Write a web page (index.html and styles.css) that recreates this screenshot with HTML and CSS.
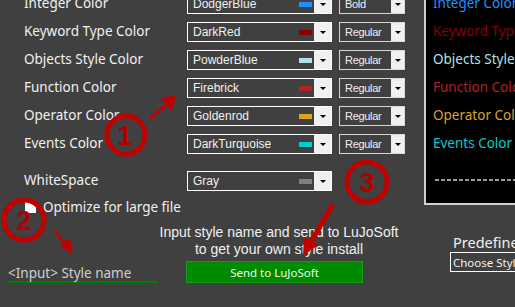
FILE: index.html
```html
<!DOCTYPE html>
<html lang="en">
<head>
    <meta charset="UTF-8">
    <meta name="viewport" content="width=device-width, initial-scale=1.0">
    <title>Style Editor</title>
    <link rel="stylesheet" href="styles.css">
</head>
<body>

<div class="page">
    <div class="top">
        <!-- Color / font settings -->
        <div class="settings">
            <div class="row">
                <span class="label">Integer Color</span>
                <div class="combo color"><span class="val">DodgerBlue</span><i class="swatch" style="background:#1e90ff"></i><b class="arrow"></b></div>
                <div class="combo style"><span class="val">Bold</span><b class="arrow"></b></div>
            </div>
            <div class="row">
                <span class="label">Keyword Type Color</span>
                <div class="combo color"><span class="val">DarkRed</span><i class="swatch" style="background:#8b0000"></i><b class="arrow"></b></div>
                <div class="combo style"><span class="val">Regular</span><b class="arrow"></b></div>
            </div>
            <div class="row">
                <span class="label">Objects Style Color</span>
                <div class="combo color"><span class="val">PowderBlue</span><i class="swatch" style="background:#b0e0e6"></i><b class="arrow"></b></div>
                <div class="combo style"><span class="val">Regular</span><b class="arrow"></b></div>
            </div>
            <div class="row">
                <span class="label">Function Color</span>
                <div class="combo color"><span class="val">Firebrick</span><i class="swatch" style="background:#b22222"></i><b class="arrow"></b></div>
                <div class="combo style"><span class="val">Regular</span><b class="arrow"></b></div>
            </div>
            <div class="row">
                <span class="label">Operator Color</span>
                <div class="combo color"><span class="val">Goldenrod</span><i class="swatch" style="background:#daa520"></i><b class="arrow"></b></div>
                <div class="combo style"><span class="val">Regular</span><b class="arrow"></b></div>
            </div>
            <div class="row">
                <span class="label">Events Color</span>
                <div class="combo color"><span class="val">DarkTurquoise</span><i class="swatch" style="background:#00ced1"></i><b class="arrow"></b></div>
                <div class="combo style"><span class="val">Regular</span><b class="arrow"></b></div>
            </div>
            <div class="row ws">
                <span class="label">WhiteSpace</span>
                <div class="combo color"><span class="val">Gray</span><i class="swatch" style="background:#808080"></i><b class="arrow"></b></div>
            </div>
            <div class="check">
                <span class="box"></span>
                <span>Optimize for large file</span>
            </div>
        </div>

        <!-- Live preview -->
        <div class="preview">
            <div class="pline" style="color:#1e90ff">Integer Color</div>
            <div class="pline" style="color:#8b0000">Keyword Type Color</div>
            <div class="pline" style="color:#b0e0e6">Objects Style Color</div>
            <div class="pline" style="color:#b22222">Function Color</div>
            <div class="pline" style="color:#daa520">Operator Color</div>
            <div class="pline" style="color:#00ced1">Events Color</div>
            <div class="dash"></div>
        </div>
    </div>

    <div class="bottom">
        <div class="name-input">&lt;Input&gt; Style name</div>
        <div class="send">
            <p>Input style name and send to LuJoSoft<br>to get your own style install</p>
            <button class="send-btn">Send to LuJoSoft</button>
        </div>
        <div class="predef">
            <div class="predef-label">Predefined Styles</div>
            <div class="combo choose"><span class="val">Choose Style</span></div>
        </div>
    </div>

    <!-- Red hand-drawn annotations -->
    <svg class="marks" width="515" height="307" viewBox="0 0 515 307">
        <g fill="none" stroke="#c30000">
            <circle cx="126" cy="145" r="19" stroke-width="5"/>
            <circle cx="24" cy="230" r="20" stroke-width="5"/>
            <circle cx="367" cy="192" r="20" stroke-width="5"/>
            <line x1="150" y1="128" x2="169" y2="113" stroke-width="4" stroke-dasharray="5 2"/>
            <line x1="55" y1="241" x2="66" y2="255" stroke-width="3.5" stroke-dasharray="4 2"/>
            <line x1="333" y1="214" x2="311" y2="252" stroke-width="5"/>
        </g>
        <g fill="#c30000">
            <polygon points="177,105 171,121 161,108"/>
            <polygon points="73,264 60,256 70,248"/>
            <polygon points="303,266 304,247 318,255"/>
        </g>
        <g class="num" fill="#b00000">
            <text x="125" y="155">1</text>
            <text x="24" y="240">2</text>
            <text x="367" y="202">3</text>
        </g>
    </svg>
</div>

</body>
</html>
```

FILE: styles.css
```css
body {
    margin: 0;
    background-color: #404040;
    font-family: "Noto Sans", "Open Sans", sans-serif;
    color: #f0f0f0;
    overflow: hidden;
}
.page {
    position: relative;
    width: 515px;
    height: 307px;
}
.top {
    display: flex;
    margin-top: -10px;
}
.settings {
    width: 400px;
    padding-left: 24px;
}
.row {
    display: flex;
    align-items: center;
    height: 28px;
}
.row.ws {
    margin-top: 9px;
}
.label {
    width: 163px;
    font-size: 13.5px;
    margin-top: -2px;
}
.combo {
    display: flex;
    align-items: center;
    box-sizing: border-box;
    height: 20px;
    background-color: #404040;
    font-family: "Liberation Sans", Arial, sans-serif;
    color: #f0f0f0;
}
.combo.color {
    width: 145px;
    border: 1px solid #ffffff;
    font-size: 12px;
}
.combo.style {
    width: 66px;
    margin-left: 7px;
    border: 1px solid #d8d8d8;
    font-size: 11px;
    letter-spacing: -0.3px;
}
.val {
    flex: 1;
    padding-left: 5px;
    white-space: nowrap;
    overflow: hidden;
}
.swatch {
    width: 13px;
    height: 5px;
    margin-right: 2px;
}
.arrow {
    position: relative;
    width: 17px;
    height: 18px;
    background-color: #f0f0f0;
}
.combo.style .arrow {
    width: 13px;
}
.arrow::after {
    content: "";
    position: absolute;
    left: 50%;
    top: 8px;
    margin-left: -3px;
    border-left: 3px solid transparent;
    border-right: 3px solid transparent;
    border-top: 3px solid #000;
}
.check {
    display: flex;
    align-items: center;
    height: 20px;
    margin-top: 2px;
    font-size: 13.5px;
}
.check .box {
    width: 11px;
    height: 11px;
    margin: 0 7px 0 1px;
    background-color: #ffffff;
}
.preview {
    flex: 1;
    height: 215px;
    box-sizing: border-box;
    padding-left: 7px;
    background-color: #000;
    border-left: 2px solid #cfcfcf;
    border-bottom: 2px solid #cfcfcf;
    overflow: hidden;
}
.pline {
    height: 28px;
    line-height: 26px;
    font-size: 13.5px;
    white-space: nowrap;
}
.dash {
    height: 2px;
    margin-top: 21px;
    margin-left: 2px;
    background: repeating-linear-gradient(90deg, #9a9a9a 0 4px, transparent 4px 6px);
}
.bottom {
    display: grid;
    grid-template-columns: 150px 242px 1fr;
    align-items: end;
    padding-left: 8px;
}
.name-input {
    line-height: 16px;
    font-size: 13.5px;
    color: #cfcfcf;
    border-bottom: 2px solid #008000;
}
.send {
    padding-top: 7px;
}
.send p {
    margin: 0 0 3px;
    font-family: "Liberation Sans", Arial, sans-serif;
    font-size: 14px;
    line-height: 17px;
    text-align: center;
    color: #f0f0f0;
}
.send-btn {
    display: block;
    width: 177px;
    height: 22px;
    margin-left: 28px;
    padding: 0;
    background-color: #008a00;
    border: 1px solid #149c14;
    color: #e8ffe8;
    font-family: "Noto Sans", sans-serif;
    font-size: 11.5px;
    cursor: pointer;
}
.predef {
    padding-left: 50px;
    margin-bottom: 11px;
    overflow: hidden;
    white-space: nowrap;
}
.predef-label {
    line-height: 16px;
    margin-bottom: 2px;
    margin-left: 3px;
    font-size: 14.5px;
}
.combo.choose {
    width: 100px;
    border: 1px solid #ffffff;
    font-size: 11.5px;
    font-family: "Noto Sans", sans-serif;
}
.combo.choose .val {
    padding-left: 2px;
}
.marks {
    position: absolute;
    left: 0;
    top: 0;
    pointer-events: none;
}
.num {
    font-family: "Liberation Sans", Arial, sans-serif;
    font-weight: bold;
    font-size: 27px;
    text-anchor: middle;
}
```
